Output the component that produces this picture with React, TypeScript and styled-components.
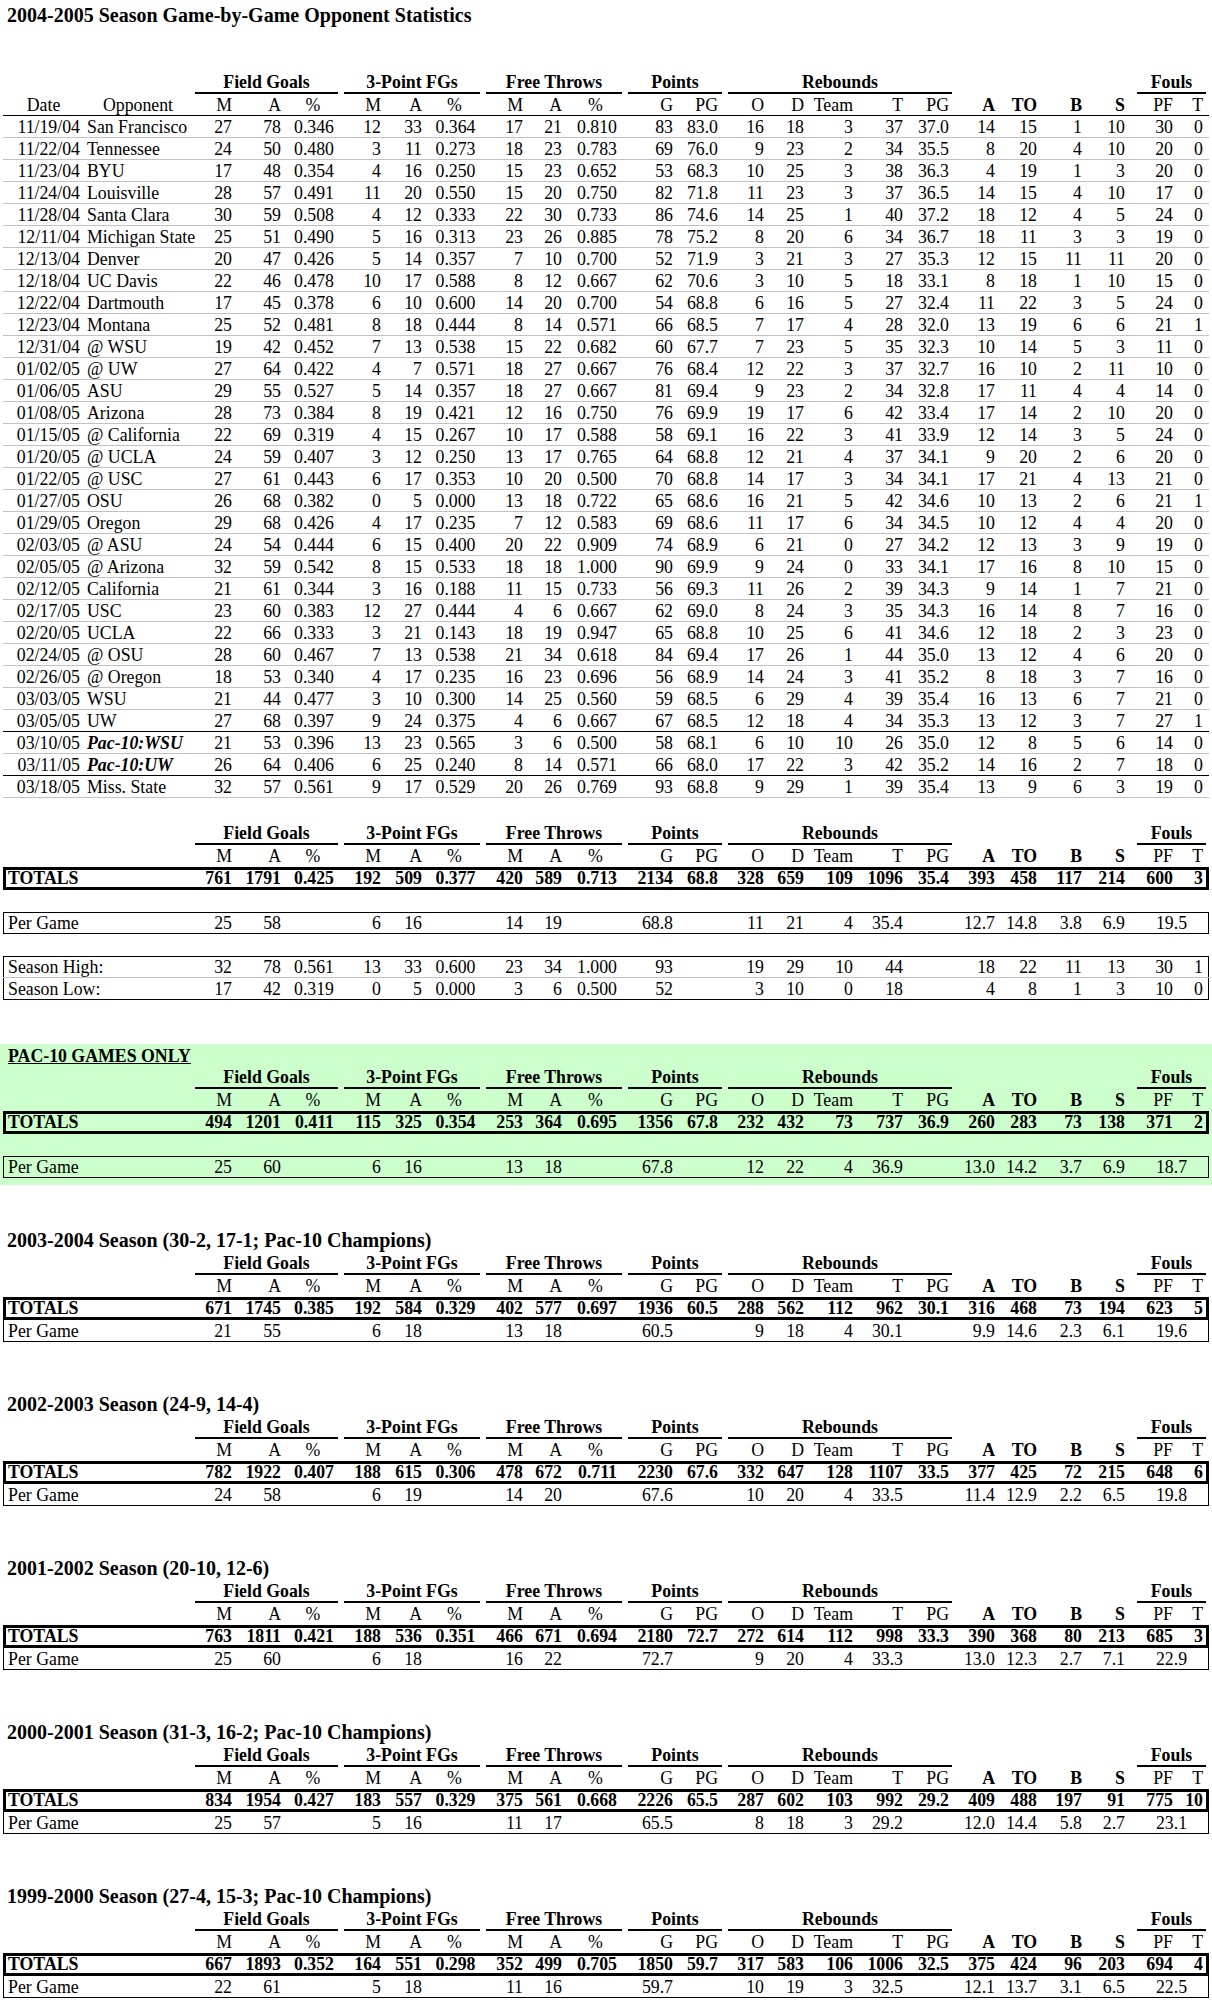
import React from 'react';
import styled, { createGlobalStyle } from 'styled-components';

const GlobalStyle = createGlobalStyle`
  html, body { margin: 0; padding: 0; background: #fff; }
  body {
    font-family: "Liberation Serif", "Times New Roman", Times, serif;
    font-size: 17.8px;
    color: #000;
  }
`;

const COL_W = [81, 108, 44, 49, 56, 44, 41, 57, 44, 39, 59, 52, 48, 43, 40, 49, 50, 48, 44, 42, 45, 48, 48, 27];
const PAD = [4, 3, 4, 4, 7, 4, 4, 7.5, 4, 4, 8, 4, 7, 4, 4, 4, 4, 6, 4, 4, 4, 9, 9, 6];
const GRID = COL_W.map((w) => `${w}px`).join(' ');

const GROUPS = [
  { label: 'Field Goals', col: 3, span: 3 },
  { label: '3-Point FGs', col: 6, span: 3 },
  { label: 'Free Throws', col: 9, span: 3 },
  { label: 'Points', col: 12, span: 2 },
  { label: 'Rebounds', col: 14, span: 5 },
  { label: 'Fouls', col: 23, span: 2 },
];

const SUBS: { t: string; bold?: boolean; center?: boolean }[] = [
  { t: 'M' }, { t: 'A' }, { t: '%', center: true },
  { t: 'M' }, { t: 'A' }, { t: '%', center: true },
  { t: 'M' }, { t: 'A' }, { t: '%', center: true },
  { t: 'G' }, { t: 'PG' },
  { t: 'O' }, { t: 'D' }, { t: 'Team' }, { t: 'T' }, { t: 'PG' },
  { t: 'A', bold: true }, { t: 'TO', bold: true }, { t: 'B', bold: true }, { t: 'S', bold: true },
  { t: 'PF' }, { t: 'T' },
];

type Game = { d: string; o: string; s: string; pac?: boolean };

const GAMES: Game[] = [
  { d: '11/19/04', o: 'San Francisco', s: '27 78 0.346 12 33 0.364 17 21 0.810 83 83.0 16 18 3 37 37.0 14 15 1 10 30 0' },
  { d: '11/22/04', o: 'Tennessee', s: '24 50 0.480 3 11 0.273 18 23 0.783 69 76.0 9 23 2 34 35.5 8 20 4 10 20 0' },
  { d: '11/23/04', o: 'BYU', s: '17 48 0.354 4 16 0.250 15 23 0.652 53 68.3 10 25 3 38 36.3 4 19 1 3 20 0' },
  { d: '11/24/04', o: 'Louisville', s: '28 57 0.491 11 20 0.550 15 20 0.750 82 71.8 11 23 3 37 36.5 14 15 4 10 17 0' },
  { d: '11/28/04', o: 'Santa Clara', s: '30 59 0.508 4 12 0.333 22 30 0.733 86 74.6 14 25 1 40 37.2 18 12 4 5 24 0' },
  { d: '12/11/04', o: 'Michigan State', s: '25 51 0.490 5 16 0.313 23 26 0.885 78 75.2 8 20 6 34 36.7 18 11 3 3 19 0' },
  { d: '12/13/04', o: 'Denver', s: '20 47 0.426 5 14 0.357 7 10 0.700 52 71.9 3 21 3 27 35.3 12 15 11 11 20 0' },
  { d: '12/18/04', o: 'UC Davis', s: '22 46 0.478 10 17 0.588 8 12 0.667 62 70.6 3 10 5 18 33.1 8 18 1 10 15 0' },
  { d: '12/22/04', o: 'Dartmouth', s: '17 45 0.378 6 10 0.600 14 20 0.700 54 68.8 6 16 5 27 32.4 11 22 3 5 24 0' },
  { d: '12/23/04', o: 'Montana', s: '25 52 0.481 8 18 0.444 8 14 0.571 66 68.5 7 17 4 28 32.0 13 19 6 6 21 1' },
  { d: '12/31/04', o: '@ WSU', s: '19 42 0.452 7 13 0.538 15 22 0.682 60 67.7 7 23 5 35 32.3 10 14 5 3 11 0' },
  { d: '01/02/05', o: '@ UW', s: '27 64 0.422 4 7 0.571 18 27 0.667 76 68.4 12 22 3 37 32.7 16 10 2 11 10 0' },
  { d: '01/06/05', o: 'ASU', s: '29 55 0.527 5 14 0.357 18 27 0.667 81 69.4 9 23 2 34 32.8 17 11 4 4 14 0' },
  { d: '01/08/05', o: 'Arizona', s: '28 73 0.384 8 19 0.421 12 16 0.750 76 69.9 19 17 6 42 33.4 17 14 2 10 20 0' },
  { d: '01/15/05', o: '@ California', s: '22 69 0.319 4 15 0.267 10 17 0.588 58 69.1 16 22 3 41 33.9 12 14 3 5 24 0' },
  { d: '01/20/05', o: '@ UCLA', s: '24 59 0.407 3 12 0.250 13 17 0.765 64 68.8 12 21 4 37 34.1 9 20 2 6 20 0' },
  { d: '01/22/05', o: '@ USC', s: '27 61 0.443 6 17 0.353 10 20 0.500 70 68.8 14 17 3 34 34.1 17 21 4 13 21 0' },
  { d: '01/27/05', o: 'OSU', s: '26 68 0.382 0 5 0.000 13 18 0.722 65 68.6 16 21 5 42 34.6 10 13 2 6 21 1' },
  { d: '01/29/05', o: 'Oregon', s: '29 68 0.426 4 17 0.235 7 12 0.583 69 68.6 11 17 6 34 34.5 10 12 4 4 20 0' },
  { d: '02/03/05', o: '@ ASU', s: '24 54 0.444 6 15 0.400 20 22 0.909 74 68.9 6 21 0 27 34.2 12 13 3 9 19 0' },
  { d: '02/05/05', o: '@ Arizona', s: '32 59 0.542 8 15 0.533 18 18 1.000 90 69.9 9 24 0 33 34.1 17 16 8 10 15 0' },
  { d: '02/12/05', o: 'California', s: '21 61 0.344 3 16 0.188 11 15 0.733 56 69.3 11 26 2 39 34.3 9 14 1 7 21 0' },
  { d: '02/17/05', o: 'USC', s: '23 60 0.383 12 27 0.444 4 6 0.667 62 69.0 8 24 3 35 34.3 16 14 8 7 16 0' },
  { d: '02/20/05', o: 'UCLA', s: '22 66 0.333 3 21 0.143 18 19 0.947 65 68.8 10 25 6 41 34.6 12 18 2 3 23 0' },
  { d: '02/24/05', o: '@ OSU', s: '28 60 0.467 7 13 0.538 21 34 0.618 84 69.4 17 26 1 44 35.0 13 12 4 6 20 0' },
  { d: '02/26/05', o: '@ Oregon', s: '18 53 0.340 4 17 0.235 16 23 0.696 56 68.9 14 24 3 41 35.2 8 18 3 7 16 0' },
  { d: '03/03/05', o: 'WSU', s: '21 44 0.477 3 10 0.300 14 25 0.560 59 68.5 6 29 4 39 35.4 16 13 6 7 21 0' },
  { d: '03/05/05', o: 'UW', s: '27 68 0.397 9 24 0.375 4 6 0.667 67 68.5 12 18 4 34 35.3 13 12 3 7 27 1' },
  { d: '03/10/05', o: 'Pac-10:WSU', pac: true, s: '21 53 0.396 13 23 0.565 3 6 0.500 58 68.1 6 10 10 26 35.0 12 8 5 6 14 0' },
  { d: '03/11/05', o: 'Pac-10:UW', pac: true, s: '26 64 0.406 6 25 0.240 8 14 0.571 66 68.0 17 22 3 42 35.2 14 16 2 7 18 0' },
  { d: '03/18/05', o: 'Miss. State', s: '32 57 0.561 9 17 0.529 20 26 0.769 93 68.8 9 29 1 39 35.4 13 9 6 3 19 0' },
];

const BLACK_AFTER = new Set([27, 29]);

const SEASONS = [
  {
    title: '2003-2004 Season (30-2, 17-1; Pac-10 Champions)',
    tot: '671 1745 0.385 192 584 0.329 402 577 0.697 1936 60.5 288 562 112 962 30.1 316 468 73 194 623 5',
    pg: '21 55 _ 6 18 _ 13 18 _ 60.5 _ 9 18 4 30.1 _ 9.9 14.6 2.3 6.1 19.6',
  },
  {
    title: '2002-2003 Season (24-9, 14-4)',
    tot: '782 1922 0.407 188 615 0.306 478 672 0.711 2230 67.6 332 647 128 1107 33.5 377 425 72 215 648 6',
    pg: '24 58 _ 6 19 _ 14 20 _ 67.6 _ 10 20 4 33.5 _ 11.4 12.9 2.2 6.5 19.8',
  },
  {
    title: '2001-2002 Season (20-10, 12-6)',
    tot: '763 1811 0.421 188 536 0.351 466 671 0.694 2180 72.7 272 614 112 998 33.3 390 368 80 213 685 3',
    pg: '25 60 _ 6 18 _ 16 22 _ 72.7 _ 9 20 4 33.3 _ 13.0 12.3 2.7 7.1 22.9',
  },
  {
    title: '2000-2001 Season (31-3, 16-2; Pac-10 Champions)',
    tot: '834 1954 0.427 183 557 0.329 375 561 0.668 2226 65.5 287 602 103 992 29.2 409 488 197 91 775 10',
    pg: '25 57 _ 5 16 _ 11 17 _ 65.5 _ 8 18 3 29.2 _ 12.0 14.4 5.8 2.7 23.1',
  },
  {
    title: '1999-2000 Season (27-4, 15-3; Pac-10 Champions)',
    tot: '667 1893 0.352 164 551 0.298 352 499 0.705 1850 59.7 317 583 106 1006 32.5 375 424 96 203 694 4',
    pg: '22 61 _ 5 18 _ 11 16 _ 59.7 _ 10 19 3 32.5 _ 12.1 13.7 3.1 6.5 22.5',
  },
];

const parse = (s: string) => s.split(' ').map((v) => (v === '_' ? '' : v));

/* ---------- styled parts ---------- */

const Page = styled.div`
  width: 1212px;
`;

const Block = styled.section<{ $mt: number; $green?: boolean; $pt?: number; $pb?: number }>`
  margin-top: ${(p) => p.$mt}px;
  padding: ${(p) => p.$pt ?? 0}px 3px ${(p) => p.$pb ?? 0}px;
  background: ${(p) => (p.$green ? '#ccffcc' : 'transparent')};
`;

const Heading = styled.div<{ $h: number }>`
  height: ${(p) => p.$h}px;
  line-height: ${(p) => p.$h}px;
  padding-left: 4px;
  font-size: 20px;
  font-weight: 700;
  white-space: nowrap;
`;

const SubHeading = styled.div`
  height: 22px;
  line-height: 22px;
  padding-left: 5px;
  font-weight: 700;
  text-decoration: underline;
  white-space: nowrap;
`;

type Rule = 'gray' | 'black' | 'none';

const Row = styled.div<{ $h?: number; $rule?: Rule; $bold?: boolean }>`
  display: grid;
  grid-template-columns: ${GRID};
  box-sizing: border-box;
  height: ${(p) => p.$h ?? 22}px;
  line-height: ${(p) => p.$h ?? 22}px;
  white-space: nowrap;
  font-weight: ${(p) => (p.$bold ? 700 : 400)};
  border-bottom: ${(p) =>
    p.$rule === 'gray' ? '1px solid #c2c2c2' : p.$rule === 'black' ? '1px solid #000' : 'none'};
`;

const TotalsRow = styled(Row)`
  box-shadow: inset 0 0 0 3px #000;
`;

const FramedRow = styled(Row)`
  box-shadow: inset 0 0 0 1px #000;
`;

const TailRow = styled(Row)`
  box-shadow: inset 1px 0 0 #000, inset -1px 0 0 #000, inset 0 -1px 0 #000;
`;

const Frame = styled.div`
  box-shadow: inset 0 0 0 1px #000;
`;

const Spacer = styled.div`
  height: 22px;
`;

const GroupCell = styled.div<{ $col: number; $span: number }>`
  grid-column: ${(p) => p.$col} / span ${(p) => p.$span};
  margin: 0 3px;
  box-sizing: border-box;
  height: 22px;
  line-height: 20px;
  border-bottom: 2px solid #000;
  text-align: center;
  font-weight: 700;
`;

const Cell = styled.div<{
  $col: number;
  $span?: number;
  $align?: 'left' | 'right' | 'center';
  $pr?: number;
  $pl?: number;
  $bold?: boolean;
  $italic?: boolean;
}>`
  grid-column: ${(p) => p.$col} / span ${(p) => p.$span ?? 1};
  text-align: ${(p) => p.$align ?? 'right'};
  padding-right: ${(p) => ((p.$align ?? 'right') === 'right' ? p.$pr ?? 4 : 0)}px;
  padding-left: ${(p) => p.$pl ?? 0}px;
  ${(p) => (p.$bold ? 'font-weight: 700;' : '')}
  ${(p) => (p.$italic ? 'font-style: italic;' : '')}
`;

/* ---------- pieces ---------- */

const GroupRow = () => (
  <Row>
    {GROUPS.map((g) => (
      <GroupCell key={g.label} $col={g.col} $span={g.span}>
        {g.label}
      </GroupCell>
    ))}
  </Row>
);

const ColHeadRow = ({ withNames, rule }: { withNames?: boolean; rule?: Rule }) => (
  <Row $rule={rule}>
    {withNames && (
      <>
        <Cell $col={1} $align="center">Date</Cell>
        <Cell $col={2} $align="center">Opponent</Cell>
      </>
    )}
    {SUBS.map((s, i) => (
      <Cell key={i} $col={i + 3} $align={s.center ? 'center' : 'right'} $pr={PAD[i + 2]} $bold={s.bold}>
        {s.t}
      </Cell>
    ))}
  </Row>
);

const StatCells = ({ values, merge }: { values: string[]; merge?: boolean }) => (
  <>
    {values.map((v, i) =>
      merge && i === 20 ? (
        <Cell key={i} $col={i + 3} $span={2} $align="center">
          {v}
        </Cell>
      ) : (
        <Cell key={i} $col={i + 3} $pr={PAD[i + 2]}>
          {v}
        </Cell>
      )
    )}
  </>
);

const Label = ({ children }: { children: React.ReactNode }) => (
  <Cell $col={1} $span={2} $align="left" $pl={5}>
    {children}
  </Cell>
);

const Totals = ({ values }: { values: string }) => (
  <TotalsRow $h={23} $bold>
    <Label>TOTALS</Label>
    <StatCells values={parse(values)} />
  </TotalsRow>
);

/* ---------- app ---------- */

export default function App() {
  return (
    <Page>
      <GlobalStyle />
      <Block $mt={0}>
        <Heading $h={30}>2004-2005 Season Game-by-Game Opponent Statistics</Heading>
      </Block>

      <Block $mt={42}>
        <GroupRow />
        <ColHeadRow withNames rule="black" />
        {GAMES.map((g, i) => (
          <Row key={g.d} $rule={BLACK_AFTER.has(i) ? 'black' : 'gray'}>
            <Cell $col={1} $pr={PAD[0]}>{g.d}</Cell>
            <Cell $col={2} $align="left" $pl={PAD[1]} $bold={g.pac} $italic={g.pac}>
              {g.o}
            </Cell>
            <StatCells values={parse(g.s)} />
          </Row>
        ))}
      </Block>

      <Block $mt={25}>
        <GroupRow />
        <ColHeadRow />
        <Totals values="761 1791 0.425 192 509 0.377 420 589 0.713 2134 68.8 328 659 109 1096 35.4 393 458 117 214 600 3" />
        <Spacer />
        <FramedRow>
          <Label>Per Game</Label>
          <StatCells merge values={parse('25 58 _ 6 16 _ 14 19 _ 68.8 _ 11 21 4 35.4 _ 12.7 14.8 3.8 6.9 19.5')} />
        </FramedRow>
        <Spacer />
        <Frame>
          <Row $rule="gray">
            <Label>Season High:</Label>
            <StatCells values={parse('32 78 0.561 13 33 0.600 23 34 1.000 93 _ 19 29 10 44 _ 18 22 11 13 30 1')} />
          </Row>
          <Row>
            <Label>Season Low:</Label>
            <StatCells values={parse('17 42 0.319 0 5 0.000 3 6 0.500 52 _ 3 10 0 18 _ 4 8 1 3 10 0')} />
          </Row>
        </Frame>
      </Block>

      <Block $mt={44} $green $pt={1} $pb={7}>
        <SubHeading>PAC-10 GAMES ONLY</SubHeading>
        <GroupRow />
        <ColHeadRow />
        <Totals values="494 1201 0.411 115 325 0.354 253 364 0.695 1356 67.8 232 432 73 737 36.9 260 283 73 138 371 2" />
        <Spacer />
        <FramedRow>
          <Label>Per Game</Label>
          <StatCells merge values={parse('25 60 _ 6 16 _ 13 18 _ 67.8 _ 12 22 4 36.9 _ 13.0 14.2 3.7 6.9 18.7')} />
        </FramedRow>
      </Block>

      {SEASONS.map((s, i) => (
        <Block key={s.title} $mt={i === 0 ? 43 : 50}>
          <Heading $h={25}>{s.title}</Heading>
          <GroupRow />
          <ColHeadRow />
          <Totals values={s.tot} />
          <TailRow>
            <Label>Per Game</Label>
            <StatCells merge values={parse(s.pg)} />
          </TailRow>
        </Block>
      ))}
    </Page>
  );
}
